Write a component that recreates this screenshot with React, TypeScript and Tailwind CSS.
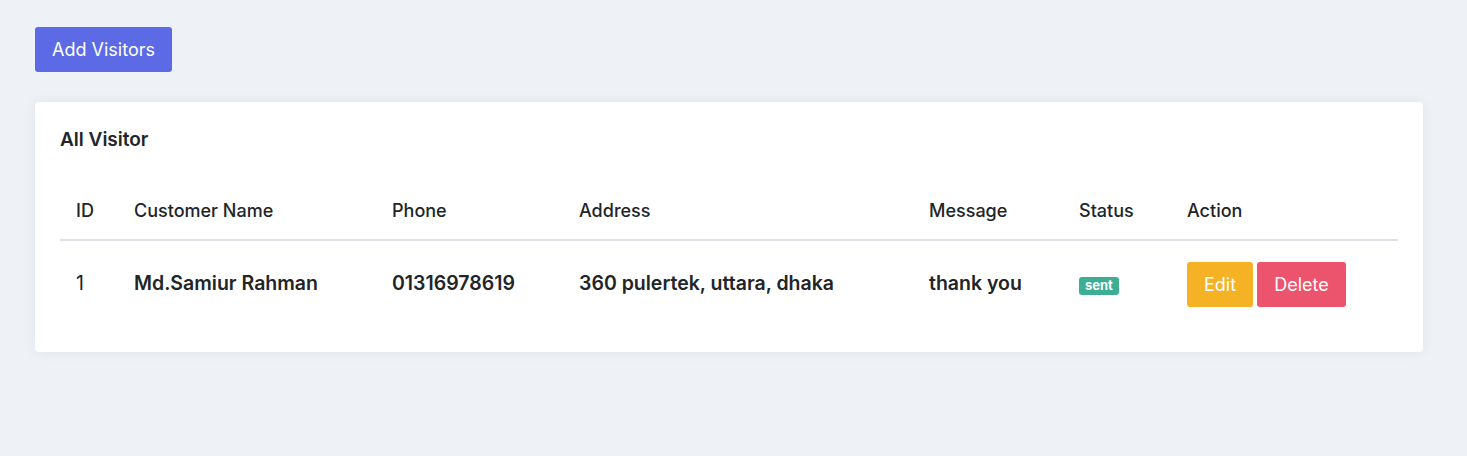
import React from 'react';

interface Visitor {
  id: number;
  name: string;
  phone: string;
  address: string;
  message: string;
  status: string;
}

const visitors: Visitor[] = [
  {
    id: 1,
    name: 'Md.Samiur Rahman',
    phone: '01316978619',
    address: '360 pulertek, uttara, dhaka',
    message: 'thank you',
    status: 'sent',
  },
];

export default function App() {
  return (
    <div
      className="min-h-[456px] w-full bg-[#eef1f5] pr-[44px] pl-[35px] pt-[27px] text-[#212529]"
      style={{ fontFamily: 'Inter, "Noto Sans", sans-serif' }}
    >
      <button className="h-[45px] w-[137px] rounded-[3px] bg-[#5d6ae6] text-[18px] text-white">
        Add Visitors
      </button>

      {/* Visitors card */}
      <div className="mt-[30px] rounded-[4px] bg-white px-[25px] pt-[26px] pb-[25px] shadow-[0_0_14px_rgba(30,40,70,0.06)]">
        <h4 className="text-[19px] leading-6 font-semibold">All Visitor</h4>

        <table className="mt-[31px] w-full table-fixed border-collapse">
          <colgroup>
            <col className="w-[58px]" />
            <col className="w-[258px]" />
            <col className="w-[187px]" />
            <col className="w-[350px]" />
            <col className="w-[150px]" />
            <col className="w-[108px]" />
            <col />
          </colgroup>
          <thead>
            <tr className="border-b-2 border-[#dee2e6] text-left text-[18px]">
              <th className="h-[57px] px-4 pb-[2px] font-medium">ID</th>
              <th className="px-4 pb-[2px] font-medium">Customer Name</th>
              <th className="px-4 pb-[2px] font-medium">Phone</th>
              <th className="px-4 pb-[2px] font-medium">Address</th>
              <th className="px-4 pb-[2px] font-medium">Message</th>
              <th className="px-4 pb-[2px] font-medium">Status</th>
              <th className="px-4 pb-[2px] font-medium">Action</th>
            </tr>
          </thead>
          <tbody>
            {visitors.map((v) => (
              <tr key={v.id} className="text-[19.5px] font-semibold">
                <td className="h-[87px] px-4 font-normal">{v.id}</td>
                <td className="px-4">{v.name}</td>
                <td className="px-4">{v.phone}</td>
                <td className="px-4">{v.address}</td>
                <td className="px-4">{v.message}</td>
                <td className="px-4">
                  <span className="inline-flex h-[18px] items-center rounded-[3px] bg-[#3bae94] px-[6px] text-[13px] font-bold text-white">
                    {v.status}
                  </span>
                </td>
                <td className="px-4">
                  <div className="flex gap-1">
                    <button className="h-[45px] w-[66px] rounded-[3px] bg-[#f5b225] text-[18px] font-normal text-white">
                      Edit
                    </button>
                    <button className="h-[45px] w-[89px] rounded-[3px] bg-[#ec536c] text-[18px] font-normal text-white">
                      Delete
                    </button>
                  </div>
                </td>
              </tr>
            ))}
          </tbody>
        </table>
      </div>
    </div>
  );
}
